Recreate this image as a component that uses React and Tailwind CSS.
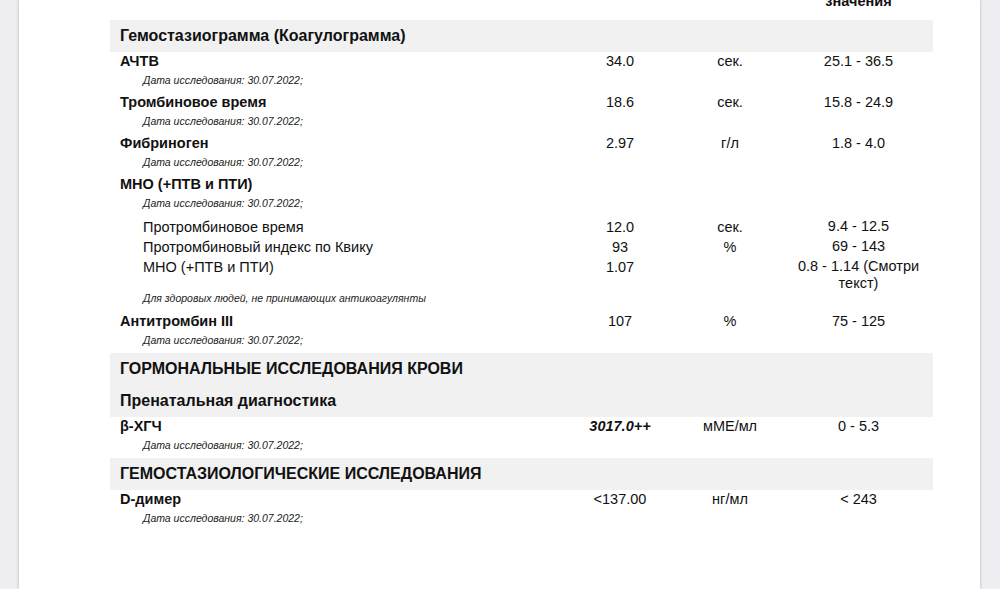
import React from "react";

const DATE = "Дата исследования: 30.07.2022;";

const tests1 = [
  { name: "АЧТВ", value: "34.0", unit: "сек.", range: "25.1 - 36.5" },
  { name: "Тромбиновое время", value: "18.6", unit: "сек.", range: "15.8 - 24.9" },
  { name: "Фибриноген", value: "2.97", unit: "г/л", range: "1.8 - 4.0" },
];

const mnoItems = [
  { name: "Протромбиновое время", value: "12.0", unit: "сек.", range: "9.4 - 12.5" },
  { name: "Протромбиновый индекс по Квику", value: "93", unit: "%", range: "69 - 143" },
  { name: "МНО (+ПТВ и ПТИ)", value: "1.07", unit: "", range: "0.8 - 1.14 (Смотри текст)" },
];

const cols = "grid grid-cols-[460px_100px_120px_137px]";

function DateLine() {
  return (
    <div className="pl-[33px] mt-[3px] text-[10.5px] leading-[14px] italic text-[#222]">{DATE}</div>
  );
}

function Test({ name, value, unit, range, strong }) {
  return (
    <div className="pb-[6px]">
      <div className={`${cols} text-[14.5px] leading-[18px]`}>
        <div className="pl-[10px] font-bold">{name}</div>
        <div className={`text-center ${strong ? "font-bold italic" : ""}`}>{value}</div>
        <div className="text-center">{unit}</div>
        <div className="text-center">{range}</div>
      </div>
      <DateLine />
    </div>
  );
}

function Band({ children }) {
  return (
    <div className="h-[32px] flex items-center pl-[10px] font-bold text-[16px]">{children}</div>
  );
}

export default function App() {
  return (
    <div className="flex w-[1000px] h-[589px] overflow-hidden bg-[#ededf2] text-[#111] font-['Liberation_Sans',Arial,sans-serif]">
      <div className="w-[19px] shrink-0" />
      <div className="w-[961px] shrink-0 bg-white shadow-[0_0_3px_rgba(0,0,0,0.25)] pl-[91px]">
        <div className={`${cols} w-[823px] h-[20px] items-start text-[14.5px] leading-[16px] font-bold`}>
          <div />
          <div />
          <div />
          <div className="text-center -mt-[7px]">значения</div>
        </div>

        <div className="w-[823px]">
          <div className="bg-[#f1f1f1]">
            <Band>Гемостазиограмма (Коагулограмма)</Band>
          </div>
          {tests1.map((t) => (
            <Test key={t.name} {...t} />
          ))}

          <div>
            <div className="pl-[10px] text-[14.5px] leading-[18px] font-bold">МНО (+ПТВ и ПТИ)</div>
            <DateLine />
            <div className="mt-[6px]">
              {mnoItems.map((t) => (
                <div key={t.name} className={`${cols} pt-[2px] text-[14.5px] leading-[18px]`}>
                  <div className="pl-[33px]">{t.name}</div>
                  <div className="text-center">{t.value}</div>
                  <div className="text-center">{t.unit}</div>
                  <div className="text-center leading-[17px]">{t.range}</div>
                </div>
              ))}
            </div>
            <div className="pl-[33px] pb-[8px] text-[10.5px] leading-[12px] italic text-[#222]">
              Для здоровых людей, не принимающих антикоагулянты
            </div>
          </div>

          <Test name="Антитромбин III" value="107" unit="%" range="75 - 125" />

          <div className="bg-[#f1f1f1]">
            <Band>ГОРМОНАЛЬНЫЕ ИССЛЕДОВАНИЯ КРОВИ</Band>
            <Band>Пренатальная диагностика</Band>
          </div>
          <Test name="β-ХГЧ" value="3017.0++" unit="мМЕ/мл" range="0 - 5.3" strong />

          <div className="bg-[#f1f1f1]">
            <Band>ГЕМОСТАЗИОЛОГИЧЕСКИЕ ИССЛЕДОВАНИЯ</Band>
          </div>
          <Test name="D-димер" value="<137.00" unit="нг/мл" range="< 243" />
        </div>
      </div>
    </div>
  );
}
